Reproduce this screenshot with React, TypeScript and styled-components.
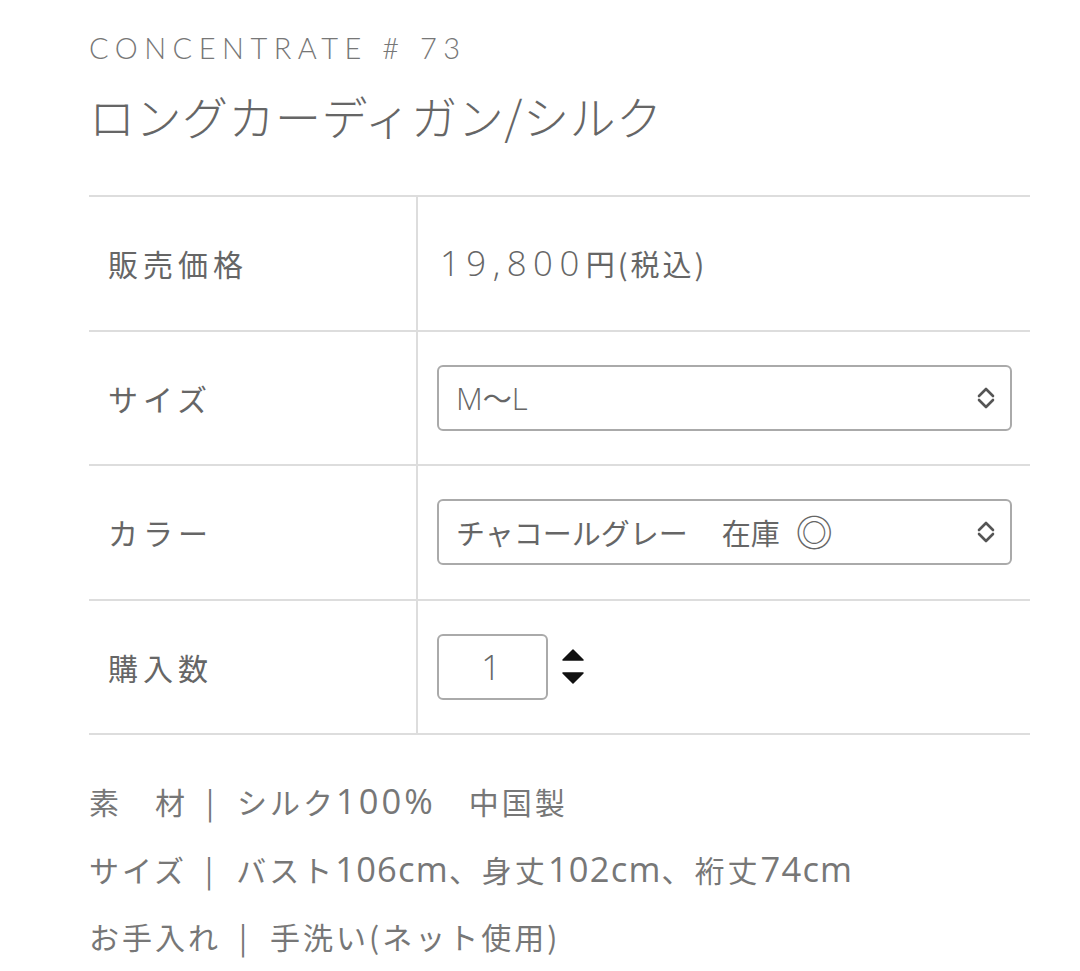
import React from 'react';
import styled, { createGlobalStyle } from 'styled-components';

const GlobalStyle = createGlobalStyle`
  html, body {
    margin: 0;
    padding: 0;
    background: #fff;
  }
  body {
    font-family: "Noto Sans CJK JP", "Noto Sans", sans-serif;
    color: #666;
  }
`;

const Page = styled.div`
  width: 1080px;
  height: 971px;
  box-sizing: border-box;
  padding: 26px 50px 0 89px;
  overflow: hidden;
`;

const Brand = styled.div`
  font-family: Lato, "Noto Sans", sans-serif;
  font-weight: 300;
  font-size: 29px;
  letter-spacing: 6.5px;
  line-height: 44px;
  color: #777;
`;

const Title = styled.h1`
  margin: 12px 0 0;
  font-weight: 300;
  font-size: 46px;
  letter-spacing: 0.5px;
  line-height: 66px;
  color: #666;
`;

const Table = styled.div`
  margin-top: 47px;
  border-top: 2px solid #ddd;
  width: 941px;
`;

const Row = styled.div`
  display: grid;
  grid-template-columns: 329px 1fr;
  height: 134.5px;
  box-sizing: border-box;
  border-bottom: 2px solid #ddd;
`;

const Label = styled.div`
  display: flex;
  align-items: center;
  padding-left: 19px;
  border-right: 2px solid #ddd;
  font-size: 30px;
  letter-spacing: 5px;
  color: #666;
`;

const Cell = styled.div`
  display: flex;
  align-items: center;
  padding-left: 19px;
  padding-right: 18px;
  font-size: 29px;
  letter-spacing: 3px;
  color: #666;
`;

const Num = styled.span<{ $gap?: number; $size?: number; $weight?: number }>`
  font-family: "Open Sans", Lato, sans-serif;
  font-weight: ${(p) => p.$weight ?? 300};
  font-size: ${(p) => p.$size ?? 1.2}em;
  line-height: 1;
  letter-spacing: ${(p) => p.$gap ?? 7}px;
`;

const Price = styled.span`
  padding-left: 3px;
`;

const Select = styled.div`
  flex: 1;
  height: 66px;
  box-sizing: border-box;
  border: 2px solid #aaa;
  border-radius: 6px;
  display: flex;
  align-items: center;
  justify-content: space-between;
  padding: 0 14px 0 17px;
  font-size: 29px;
  color: #666;
  letter-spacing: 0;
`;

const Latin = styled.span`
  font-family: "Open Sans", sans-serif;
  font-weight: 300;
  font-size: 31px;
`;

const Stock = styled.span`
  margin-left: 5px;
`;

const Mark = styled.span`
  display: inline-block;
  margin-left: 16px;
  font-size: 37px;
  line-height: 1;
  vertical-align: -2px;
`;

const Qty = styled.div`
  width: 111px;
  height: 66px;
  box-sizing: border-box;
  border: 2px solid #aaa;
  border-radius: 6px;
  display: flex;
  align-items: center;
  justify-content: center;
  font-family: "Open Sans", Lato, sans-serif;
  font-weight: 300;
  font-size: 34px;
  color: #666;
`;

const Spinner = styled.div`
  margin-left: 14px;
  display: flex;
  flex-direction: column;
  gap: 11px;
`;

const Notes = styled.div`
  margin-top: 44px;
  display: flex;
  flex-direction: column;
  gap: 22.5px;
`;

const Note = styled.div`
  font-size: 30px;
  line-height: 45px;
  letter-spacing: 3px;
  color: #777;
  white-space: nowrap;
`;

const Bar = styled.span`
  margin: 0 20px 0 18px;
`;

const Chevrons = () => (
  <svg width="20" height="24" viewBox="0 0 20 24" fill="none" stroke="#555" strokeWidth="2.6" strokeLinecap="round" strokeLinejoin="round">
    <polyline points="3,10 10,3 17,10" />
    <polyline points="3,14 10,21 17,14" />
  </svg>
);

const Up = () => (
  <svg width="22" height="12" viewBox="0 0 22 12">
    <path d="M11 1 L21 11 L1 11 Z" fill="#111" strokeLinejoin="round" stroke="#111" strokeWidth="1.5" />
  </svg>
);

const Down = () => (
  <svg width="22" height="12" viewBox="0 0 22 12">
    <path d="M1 1 L21 1 L11 11 Z" fill="#111" strokeLinejoin="round" stroke="#111" strokeWidth="1.5" />
  </svg>
);

export default function App() {
  return (
    <>
      <GlobalStyle />
      <Page>
        <Brand>CONCENTRATE # 73</Brand>
        <Title>ロングカーディガン/シルク</Title>
        <Table>
          <Row>
            <Label>販売価格</Label>
            <Cell>
              <Price>
                <Num $gap={6.5}>19,800</Num>円(税込)
              </Price>
            </Cell>
          </Row>
          <Row>
            <Label>サイズ</Label>
            <Cell>
              <Select>
                <span>
                  <Latin>M</Latin>〜<Latin>L</Latin>
                </span>
                <Chevrons />
              </Select>
            </Cell>
          </Row>
          <Row>
            <Label>カラー</Label>
            <Cell>
              <Select>
                <span>
                  チャコールグレー　<Stock>在庫</Stock>
                  <Mark>◎</Mark>
                </span>
                <Chevrons />
              </Select>
            </Cell>
          </Row>
          <Row>
            <Label>購入数</Label>
            <Cell>
              <Qty>1</Qty>
              <Spinner>
                <Up />
                <Down />
              </Spinner>
            </Cell>
          </Row>
        </Table>
        <Notes>
          <Note>
            素　材<Bar>|</Bar>シルク<Num $gap={3} $size={1.15} $weight={400}>100%</Num>　中国製
          </Note>
          <Note>
            サイズ<Bar>|</Bar>バスト<Num $gap={1.2} $size={1.15} $weight={400}>106cm</Num>、身丈
            <Num $gap={1.2} $size={1.15} $weight={400}>102cm</Num>、裄丈
            <Num $gap={1.2} $size={1.15} $weight={400}>74cm</Num>
          </Note>
          <Note>
            お手入れ<Bar>|</Bar>手洗い(ネット使用)
          </Note>
        </Notes>
      </Page>
    </>
  );
}
